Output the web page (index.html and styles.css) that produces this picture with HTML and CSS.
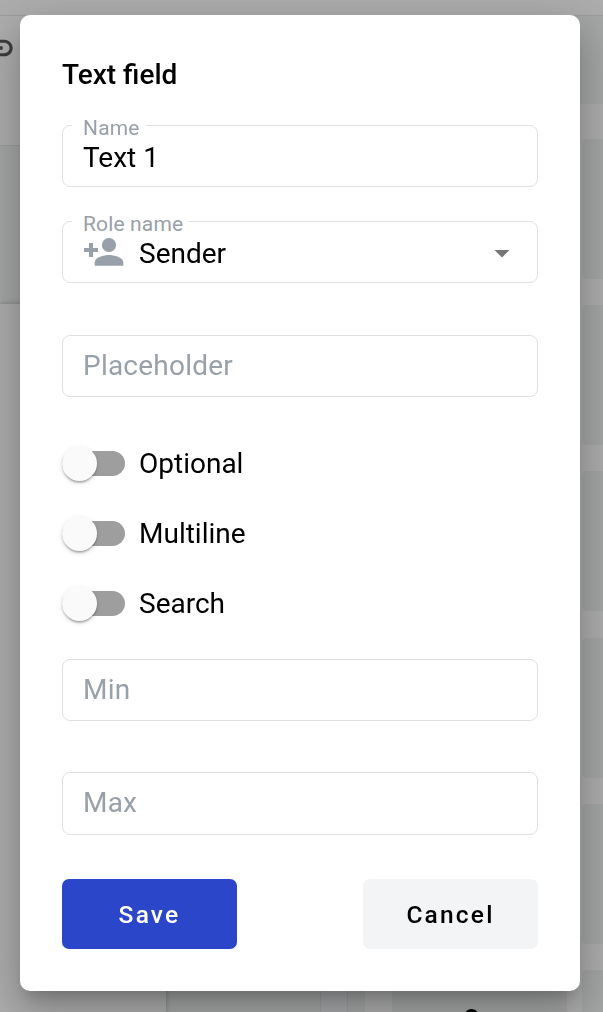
FILE: index.html
```html
<!DOCTYPE html>
<html lang="en">
<head>
<meta charset="utf-8">
<title>Text field</title>
<link rel="stylesheet" href="styles.css">
</head>
<body>
<div class="workspace">
  <header class="topbar"></header>
  <div class="columns">
    <main class="editor">
      <div class="tools">
        <svg class="link-icon" viewBox="0 0 24 24"><path d="M3.9 12c0-1.71 1.39-3.1 3.1-3.1h4V7H7c-2.76 0-5 2.24-5 5s2.24 5 5 5h4v-1.9H7c-1.71 0-3.1-1.39-3.1-3.1zM8 13h8v-2H8v2zm9-6h-4v1.9h4c1.71 0 3.1 1.39 3.1 3.1s-1.39 3.1-3.1 3.1h-4V17h4c2.76 0 5-2.24 5-5s-2.24-5-5-5z"/></svg>
      </div>
      <div class="canvas">
        <div class="sheet"></div>
        <div class="scrollbar"></div>
      </div>
    </main>
    <aside class="panel">
      <div class="panel-head"></div>
      <div class="tiles">
        <i class="tile"></i><i class="tile"></i>
        <i class="tile"></i><i class="tile"></i>
        <i class="tile"></i><i class="tile"></i>
        <i class="tile"></i><i class="tile"></i>
        <i class="tile"></i><i class="tile"></i>
        <i class="tile"><span class="tile-icon"></span></i><i class="tile"></i>
      </div>
    </aside>
  </div>
</div>
<div class="overlay">
  <form class="dialog">
    <h2 class="title">Text field</h2>
    <div class="field"><label class="label">Name</label><span class="value">Text 1</span></div>
    <div class="field role">
      <label class="label">Role name</label>
      <svg class="person" viewBox="0 0 40 30"><path d="M7 6h4v5h5v4h-5v5H7v-5H2v-4h5z"/><circle cx="27" cy="8" r="7.1"/><path d="M12.7 28.8v-3.6c0-4.7 9.6-7.1 14.3-7.1s14.3 2.4 14.3 7.1v3.6z"/></svg>
      <span class="value">Sender</span>
      <span class="caret"></span>
    </div>
    <div class="field placeholder"><span class="hint">Placeholder</span></div>
    <div class="switches">
      <label class="switch"><span class="track"><span class="thumb"></span></span>Optional</label>
      <label class="switch"><span class="track"><span class="thumb"></span></span>Multiline</label>
      <label class="switch"><span class="track"><span class="thumb"></span></span>Search</label>
    </div>
    <div class="field min"><span class="hint">Min</span></div>
    <div class="field max"><span class="hint">Max</span></div>
    <div class="actions">
      <button type="button" class="button save">Save</button>
      <button type="button" class="button cancel">Cancel</button>
    </div>
  </form>
</div>
</body>
</html>
```

FILE: styles.css
```css
* { box-sizing: border-box; }
body {
  margin: 0;
  height: 1012px;
  overflow: hidden;
  font-family: Roboto, "Liberation Sans", sans-serif;
  font-size: 28px;
  color: #000;
}
.workspace { height: 1012px; display: flex; flex-direction: column; background: #adadad; overflow: hidden; }
.topbar { flex: 0 0 16px; border-bottom: 1px solid #9c9e9e; }
.columns { flex: 1; display: flex; min-height: 0; }
.editor { flex: 0 0 365px; display: flex; flex-direction: column; }
.tools { flex: 0 0 130px; border-bottom: 1px solid #9c9e9e; padding-top: 12px; overflow: hidden; }
.link-icon { display: block; width: 40px; height: 40px; margin-left: -24px; fill: #3c3c3c; }
.canvas { flex: 1; display: flex; background: #a4a7a6; }
.sheet { width: 166px; margin-top: 158px; background: #adadad; box-shadow: 0 0 5px rgba(0, 0, 0, .25); }
.scrollbar { width: 28px; margin-left: 154px; background: #a7a8a9; border: solid #9c9e9f; border-width: 0 1px; }
.panel { flex: 1; min-width: 0; overflow: hidden; }
.panel-head { height: 88px; background: #a4a7a6; }
.tiles { display: grid; grid-template-columns: 175px 175px; grid-auto-rows: 140px; gap: 26.2px 15px; padding: 35px 0 0 27px; }
.tile { display: block; background: #a4a6a5; border-radius: 5px; }
.tile-icon { display: block; width: 15px; height: 15px; margin: 39px 0 0 72px; border: 3px solid #000; border-radius: 50%; }

.overlay { position: fixed; inset: 0; padding: 15px 23px 21px 20px; }
.dialog {
  height: 976px;
  width: 560px;
  padding: 42px;
  background: #fff;
  border-radius: 10px;
  box-shadow: 0 11px 15px -7px rgba(0, 0, 0, .2), 0 24px 38px 3px rgba(0, 0, 0, .14), 0 9px 46px 8px rgba(0, 0, 0, .12);
}
.title { margin: 0; height: 35px; font-size: 28px; line-height: 35px; font-weight: 500; }
.field {
  position: relative;
  display: flex;
  align-items: center;
  height: 62px;
  margin-top: 34px;
  padding: 0 20px;
  border: 1px solid #dfe0e2;
  border-radius: 8px;
}
.title + .field { margin-top: 33px; }
.label {
  position: absolute;
  left: 9px;
  top: -11px;
  padding: 0 6px 0 11px;
  background: #fff;
  color: #98a0a9;
  font-size: 21px;
  line-height: 26px;
  letter-spacing: .15px;
}
.value, .hint { line-height: 34px; padding-top: 4px; }
.hint { color: #98a0a9; padding-top: 0; letter-spacing: .22px; }
.person { width: 40px; height: 30px; margin: 0 17px 0 -1px; fill: #98a0a9; overflow: visible; }
.caret { width: 16px; height: 8px; margin: 3px 7px 0 auto; background: #757575; clip-path: polygon(0 0, 100% 0, 50% 100%); }
.placeholder { margin-top: 52px; }
.switches { display: grid; gap: 35px; margin-top: 49px; }
.switch { display: flex; align-items: center; gap: 14px; height: 35px; line-height: 35px; }
.track { width: 63px; height: 25px; border-radius: 13px; background: #9e9e9e; }
.thumb {
  display: block;
  width: 35px;
  height: 35px;
  margin-top: -5px;
  border-radius: 50%;
  background: #fafafa;
  box-shadow: 0 3px 2px -2px rgba(0, 0, 0, .2), 0 2px 2px rgba(0, 0, 0, .14), 0 2px 5px rgba(0, 0, 0, .12);
}
.min { margin-top: 38px; }
.max { margin-top: 51px; height: 63px; }
.max .hint { padding-bottom: 2px; }
.actions { display: flex; justify-content: space-between; margin-top: 44px; }
.button {
  width: 175px;
  height: 70px;
  padding: 1px 0 0;
  border: 0;
  border-radius: 7px;
  font: 500 24.5px/42px Roboto, "Liberation Sans", sans-serif;
  letter-spacing: 2.2px;
}
.save { background: #2b46c8; color: #fff; }
.cancel { background: #f3f4f6; color: #000; }
```
